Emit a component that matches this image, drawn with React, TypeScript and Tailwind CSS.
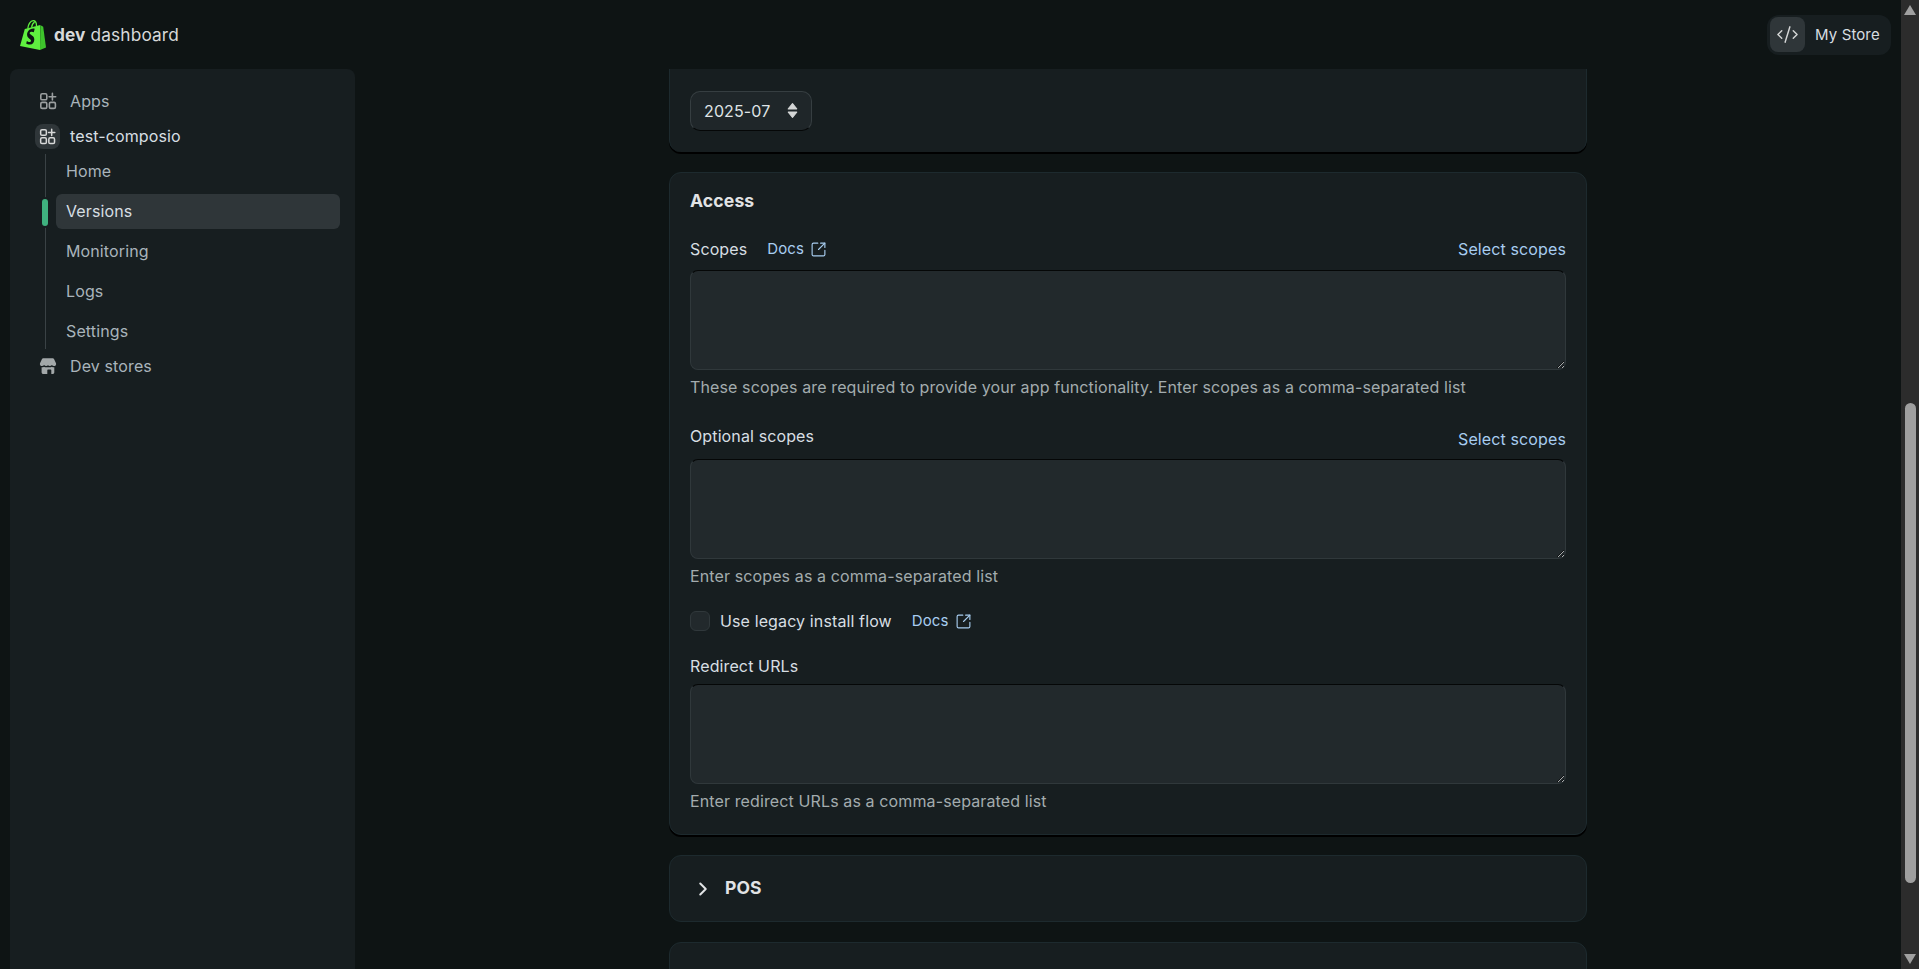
import { ChevronRight, CodeXml, SquareArrowOutUpRight } from "lucide-react";

const AppsIcon = ({ className }: { className: string }) => (
  <svg viewBox="0 0 20 20" fill="none" stroke="currentColor" strokeWidth="1.6" className={className}>
    <rect x="2.8" y="2.8" width="6" height="6" rx="1.4" />
    <rect x="2.8" y="11.4" width="6" height="6" rx="1.4" />
    <rect x="11.4" y="11.4" width="6" height="6" rx="1.4" />
    <path d="M14.4 2.4v6.6M11.1 5.7h6.6" strokeLinecap="round" />
  </svg>
);

const StoreIcon = () => (
  <svg viewBox="0 0 20 20" className="w-[20px] h-[20px] text-[#a3a8a9]" fill="currentColor">
    <path d="M5.2 2.2h9.6c.5 0 1 .3 1.2.8l2 4.2c.5 1.4-.5 2.9-2 2.9-.9 0-1.6-.4-2.1-1-.5.6-1.2 1-2.1 1-.7 0-1.3-.3-1.8-.8-.5.5-1.1.8-1.8.8-.9 0-1.6-.4-2.1-1-.5.6-1.2 1-2.1 1-1.5 0-2.5-1.5-2-2.9l2-4.2c.2-.5.7-.8 1.2-.8z" />
    <path fillRule="evenodd" d="M3.6 11.2c.9.1 1.7-.1 2.4-.5.7.4 1.4.6 2.1.6v0h3.8c.7 0 1.4-.2 2-.6.7.4 1.5.6 2.4.5v5c0 1-.8 1.8-1.8 1.8H5.4c-1 0-1.8-.8-1.8-1.8v-5zm6.4 2.3c-.4 0-.7.3-.7.7V18h4v-3.8c0-.4-.3-.7-.7-.7H10z" />
  </svg>
);

const ShopifyLogo = () => (
  <svg viewBox="0 0 26 30" className="w-[26px] h-[30px] shrink-0">
    <path fill="#5ff03f" d="M20.3 5 4.8 9 0 26l20 4z" />
    <path fill="#3ec42c" d="M20.4 5.4l1.2.4 1.6 1 2.8 20.8-6 2.4z" />
    <path fill="none" stroke="#5ff03f" strokeWidth="1.3" d="M7.8 8.6c.3-4 2.6-7.9 5.4-7.9 2.4 0 3.3 2.6 3.3 5.2M11.6 7.6c.3-2.4 1.4-4.6 3-5.4" />
    <path fill="#0e1414" transform="translate(-0.2 -2.2)" d="M14.8 11.5l-.8 3c-.7-.4-1.6-.6-2.3-.5-1.8.1-1.9 1.2-1.9 1.5.1 1.7 4.5 2 4.7 5.9.2 3.1-1.6 5.2-4.3 5.4-1.6.1-3-.5-3.8-1.1l.7-2.6c.6.5 2 1.3 3 1.1.8 0 1.1-.7 1.1-1.2-.1-2.2-3.7-2.1-3.9-5.7-.2-3.1 1.8-6.2 6.3-6.5.7 0 1.1.1 1.2.2z" />
  </svg>
);

const Docs = () => (
  <a className="flex items-center gap-[6px] pt-[1px] text-[15px] text-[#a8cdf0]">
    Docs
    <SquareArrowOutUpRight className="w-[17px] h-[17px]" strokeWidth={1.6} />
  </a>
);

const Box = () => (
  <textarea className="block w-full h-[100px] rounded-lg bg-[#22292c] border border-[#30383b] border-t-[#050707] outline-none [color-scheme:dark]" />
);

const Hint = ({ text }: { text: string }) => (
  <p className="mt-[7px] leading-[20px] text-[#a3acae]">{text}</p>
);

const subNav = ["Home", "Versions", "Monitoring", "Logs", "Settings"];

export default function App() {
  return (
    <div className="flex h-screen overflow-hidden bg-[#0e1414] font-['Inter',sans-serif] text-[16px] tracking-[0.12px]">
      <div className="flex-1 min-w-0 flex flex-col">
        <header className="h-[69px] shrink-0 flex items-center justify-between pl-[20px] pr-[10px]">
          <div className="flex items-center gap-[8px] text-[17.3px] text-[#d8d9d9]">
            <ShopifyLogo />
            <span>
              <b className="font-bold">dev</b> dashboard
            </span>
          </div>
          <div className="flex items-center h-[40px] w-[124px] rounded-xl bg-[#171e20] pl-[3px] gap-[10px] text-[15px] text-[#d7dde0]">
            <span className="flex items-center justify-center w-[35px] h-[35px] rounded-lg bg-[#2f3639] text-[#d4d6d6]">
              <CodeXml className="w-[23px] h-[23px]" strokeWidth={1.5} />
            </span>
            <span className="pt-[1px]">My Store</span>
          </div>
        </header>

        <div className="flex-1 min-h-0 flex">
          <aside className="w-[345px] ml-[10px] shrink-0 rounded-t-lg bg-[#171e20] pt-[15px] px-[15px]">
            <div className="h-[35px] pb-[1px] flex items-center gap-[12px] pl-[13px] text-[#a9b4bb]">
              <AppsIcon className="w-[20px] h-[20px] text-[#9b9fa0]" />
              Apps
            </div>
            <div className="h-[35px] pb-[1px] flex items-center gap-[10px] pl-[10px] text-[#d7dfe3]">
              <span className="flex items-center justify-center w-[25px] h-[25px] rounded-lg bg-[#2f3639]">
                <AppsIcon className="w-[19px] h-[19px] text-[#d8d9d9]" />
              </span>
              test-composio
            </div>
            <div className="relative flex flex-col gap-[5px] pl-[31px]">
              <span className="absolute left-[20px] top-0 bottom-0 w-px bg-[#3a4245]" />
              {subNav.map((item) => (
                <div
                  key={item}
                  className={
                    item === "Versions"
                      ? "relative h-[35px] pb-[1px] flex items-center pl-[10px] rounded-md bg-[#2f3639] text-[#d7dfe3]"
                      : "h-[35px] pb-[1px] flex items-center pl-[10px] text-[#a9b4bb]"
                  }
                >
                  {item === "Versions" && (
                    <span className="absolute left-[-14px] top-[5px] w-[6px] h-[27px] rounded-full bg-[#3fb27f] ring-2 ring-[#171e20]" />
                  )}
                  {item}
                </div>
              ))}
            </div>
            <div className="h-[35px] pb-[1px] flex items-center gap-[12px] pl-[13px] text-[#a9b4bb]">
              <StoreIcon />
              Dev stores
            </div>
          </aside>

          <main className="flex-1 min-w-0 flex flex-col gap-[20px] pl-[314px] pr-[314px]">
            <section className="shrink-0 h-[83px] pt-[22px] px-[20px] rounded-b-xl bg-[#171e20] border-x border-[#1d2a2e] shadow-[0_2px_0_#000]">
              <div className="flex items-center justify-between w-[122px] h-[40px] pl-[13px] pr-[13px] pb-[1px] rounded-[10px] bg-[#1f2629] border border-[#363e41] border-b-[#050707] text-[#dfe3e5]">
                2025-07
                <svg viewBox="0 0 10 16" className="w-[11px] h-[17px] fill-[#d4d6d6] stroke-[#d4d6d6]">
                  <path d="M5 1.5 9 6.5H1zM5 14.5 1 9.5h8z" strokeLinejoin="round" />
                </svg>
              </div>
            </section>

            <section className="shrink-0 h-[663px] pt-[18px] px-[20px] rounded-xl bg-[#171e20] border border-[#1d2a2e] shadow-[0_2px_0_#000]">
              <h2 className="text-[17.6px] leading-[20px] font-bold text-[#e1e3e5]">Access</h2>
              <div className="mt-[27px] h-[22px] flex items-center justify-between">
                <div className="flex items-center gap-[20px] text-[#d7dfe3]">
                  Scopes
                  <Docs />
                </div>
                <a className="text-[#a8cdf0]">Select scopes</a>
              </div>
              <div className="mt-[10px]">
                <Box />
              </div>
              <Hint text="These scopes are required to provide your app functionality. Enter scopes as a comma-separated list" />

              <div className="mt-[30px] h-[24px] flex items-center justify-between text-[#d7dfe3]">
                <span className="-mt-[6px]">Optional scopes</span>
                <a className="text-[#a8cdf0]">Select scopes</a>
              </div>
              <div className="mt-[8px]">
                <Box />
              </div>
              <Hint text="Enter scopes as a comma-separated list" />

              <div className="mt-[24px] h-[22px] flex items-center text-[#d7dfe3]">
                <span className="w-[20px] h-[20px] rounded-md bg-[#22292c] border border-[#30383b]" />
                <span className="ml-[10px] mr-[20px]">Use legacy install flow</span>
                <Docs />
              </div>
              <p className="mt-[24px] leading-[20px] text-[#d7dfe3]">Redirect URLs</p>
              <div className="mt-[8px]">
                <Box />
              </div>
              <Hint text="Enter redirect URLs as a comma-separated list" />
            </section>

            <section className="shrink-0 h-[67px] flex items-center gap-[11px] pl-[22px] rounded-xl bg-[#171e20] border border-[#1d2a2e] text-[17.5px] font-bold text-[#e1e3e5]">
              <ChevronRight className="w-[22px] h-[22px]" strokeWidth={2.2} />
              POS
            </section>

            <section className="shrink-0 h-[60px] rounded-xl bg-[#171e20] border border-[#1d2a2e]" />
          </main>
        </div>
      </div>

      <div className="w-[18px] shrink-0 flex flex-col items-center bg-[#2c2c2c]">
        <svg viewBox="0 0 12 10" className="w-[12px] h-[10px] mt-[5px] fill-[#a0a0a0]">
          <path d="M6 0 12 10H0z" />
        </svg>
        <div className="w-[11px] h-[480px] mt-[388px] rounded-full bg-[#9f9f9f]" />
        <svg viewBox="0 0 12 10" className="w-[12px] h-[10px] mt-auto mb-[5px] fill-[#a0a0a0]">
          <path d="M6 10 0 0h12z" />
        </svg>
      </div>
    </div>
  );
}
